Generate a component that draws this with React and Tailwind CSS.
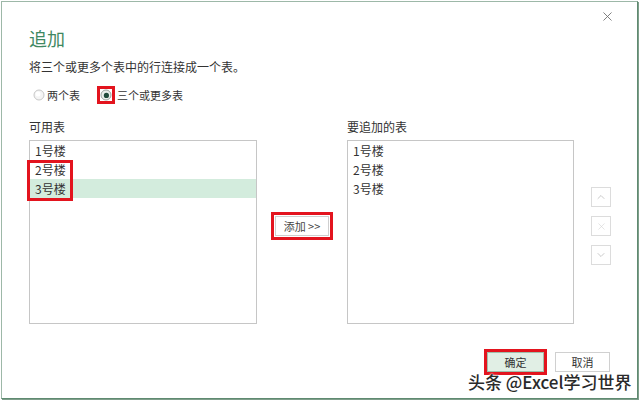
import { X, ChevronUp, ChevronDown } from "lucide-react";

const FONT = "font-['Noto_Sans_CJK_SC','Noto_Sans',sans-serif]";

function Radio({ checked }) {
  return (
    <svg width="12" height="12" viewBox="0 0 12 12">
      <circle cx="6" cy="6" r="5" fill={checked ? "#e9eeea" : "#f4f4f4"} stroke={checked ? "#9aa39d" : "#c8c8c8"} strokeWidth="1" />
      {checked ? <circle cx="6.4" cy="6.4" r="2.6" fill="#1f4b3a" /> : <circle cx="5" cy="5" r="2.5" fill="#ffffff" />}
    </svg>
  );
}

function RedBox({ className }) {
  return <span className={`pointer-events-none absolute border-[3px] border-[#e3141e] ${className}`} />;
}

function ListBox({ items, selected, mark }) {
  return (
    <div className="relative h-[184px] border border-[#c6c6c6] bg-white">
      {items.map((item, i) => (
        <div
          key={item}
          className={`h-[19px] pl-[5px] leading-[19px] ${i === selected ? "bg-[#d3ecdd]" : ""}`}
        >
          {item}
        </div>
      ))}
      {mark ? <RedBox className="left-[-3px] top-[19px] h-[41px] w-[46px]" /> : null}
    </div>
  );
}

function ArrowButton({ children }) {
  return (
    <button
      type="button"
      className="flex h-[20px] w-[20px] items-center justify-center border border-[#dcdcdc] bg-white text-[#b8b8b8]"
    >
      {children}
    </button>
  );
}

export default function App() {
  const tables = ["1号楼", "2号楼", "3号楼"];

  return (
    <div className={`relative h-[401px] w-[640px] overflow-hidden bg-white ${FONT} text-[12px] text-[#333]`}>
      <div className="ml-px mt-px h-[398px] w-[637px] border border-[#9db8a8] border-b-[#5f8a71] border-r-[#5f8a71] shadow-[1px_1px_0_#7f9f8b]">
        <div className="mt-[7px] flex h-[14px] justify-end pr-[22px]">
          <X size={15} strokeWidth={1.4} className="text-[#6f6f6f]" />
        </div>

        <div className="pl-[27px]">
          <h1 className="mt-[3px] text-[18px] leading-[24px] text-[#3f8862]">追加</h1>
          <p className="mt-[9px] leading-[16px]">将三个或更多个表中的行连接成一个表。</p>

          <div className="mt-[11px] flex h-[18px] items-center text-[11px]">
            <span className="ml-[4px] flex items-center">
              <Radio checked={false} />
            </span>
            <span className="ml-[2px]">两个表</span>
            <span className="relative ml-[17px] flex h-[18px] w-[18px] items-center justify-center">
              <Radio checked />
              <RedBox className="inset-0" />
            </span>
            <span className="ml-[2px]">三个或更多表</span>
          </div>

          <div className="mt-[15px] flex items-start">
            <div className="w-[228px]">
              <div className="h-[16px] leading-[16px]">可用表</div>
              <div className="mt-[5px]">
                <ListBox items={tables} selected={2} mark />
              </div>
            </div>

            <div className="flex w-[90px] justify-center pt-[97px]">
              <div className="relative">
                <button
                  type="button"
                  className="h-[20px] w-[54px] border border-[#cfcfcf] bg-white text-[11px] leading-[18px] text-[#444]"
                >
                  添加 &gt;&gt;
                </button>
                <RedBox className="-inset-[4px]" />
              </div>
            </div>

            <div className="w-[227px]">
              <div className="h-[16px] leading-[16px]">要追加的表</div>
              <div className="mt-[5px]">
                <ListBox items={tables} selected={-1} />
              </div>
            </div>

            <div className="ml-[17px] flex flex-col gap-[9px] pt-[68px]">
              <ArrowButton>
                <ChevronUp size={12} strokeWidth={1.5} />
              </ArrowButton>
              <ArrowButton>
                <X size={11} strokeWidth={1.2} className="text-[#d0d0d0]" />
              </ArrowButton>
              <ArrowButton>
                <ChevronDown size={12} strokeWidth={1.5} />
              </ArrowButton>
            </div>
          </div>

          <div className="mt-[28px] flex justify-end gap-[11px] pr-[27px]">
            <div className="relative">
              <button
                type="button"
                className="h-[20px] w-[57px] border border-[#9fbfab] bg-[#e1efe5] text-[11px] leading-[18px] text-[#333]"
              >
                确定
              </button>
              <RedBox className="-inset-[3px]" />
            </div>
            <button
              type="button"
              className="h-[20px] w-[55px] border border-[#d0d0d0] bg-white text-[11px] leading-[18px] text-[#333]"
            >
              取消
            </button>
          </div>
        </div>
      </div>

      <div className="pointer-events-none absolute left-[468px] top-[371px] text-[17px] font-medium leading-[22px] text-[#2a2a2a] [text-shadow:0_0_2px_#fff,0_0_2px_#fff]">
        头条 @Excel学习世界
      </div>
    </div>
  );
}
